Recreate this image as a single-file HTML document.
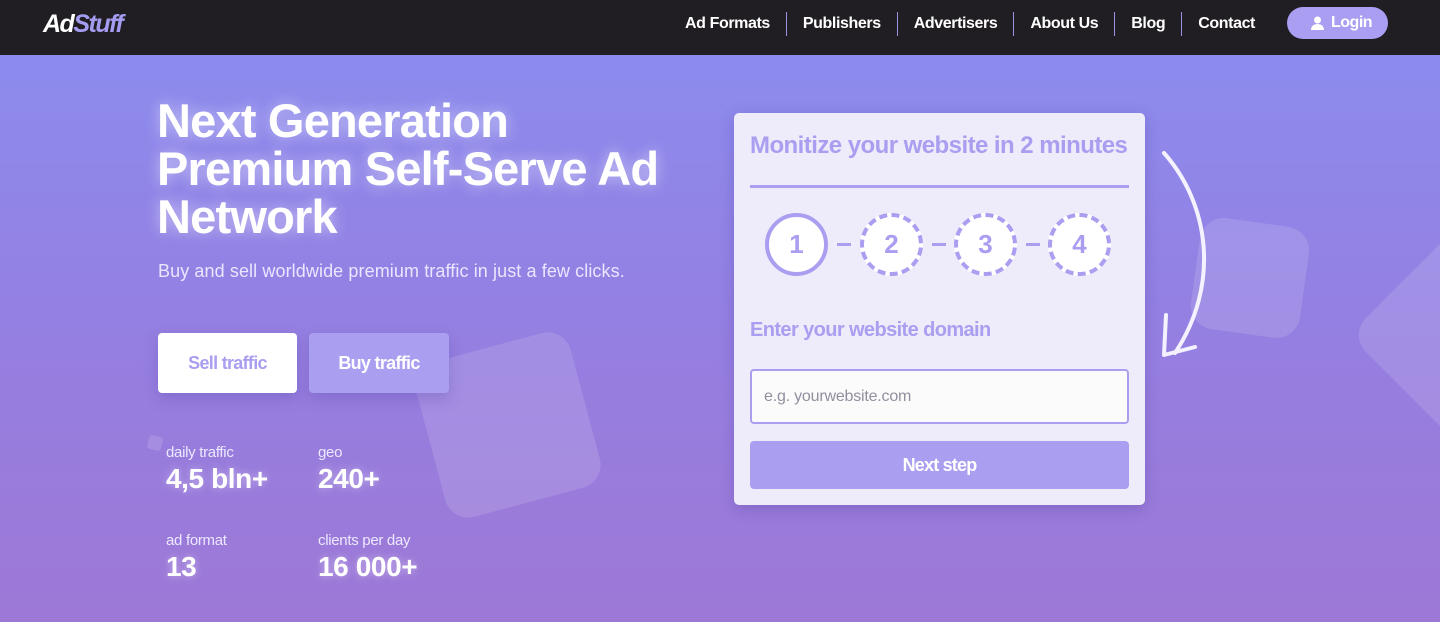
<!DOCTYPE html>
<html><head><style>
*{margin:0;padding:0;box-sizing:border-box}
body{width:1440px;height:622px;overflow:hidden;font-family:"Liberation Sans",sans-serif;background:linear-gradient(180deg,#8a8ef0 0%,#9480e2 50%,#9d78d6 100%);position:relative}
.nav{height:55px;background:#201e22;position:relative}
.logo{position:absolute;left:43px;top:10px;font-size:25px;font-weight:bold;font-style:italic;color:#fff;letter-spacing:-1.5px}
.logo span{color:#a49cf0}
.links{position:absolute;right:169px;top:12px;display:flex;font-size:16px;font-weight:bold;color:#fff;letter-spacing:-0.4px}
.links div{padding:0 16px;border-left:1px solid #9a94e0;line-height:24px}
.links div:first-child{border:none}
.login{position:absolute;left:1287px;top:7px;width:101px;height:32px;border-radius:16px;background:#a99ef2;color:#fff;font-weight:bold;font-size:16px;line-height:32px;padding-left:44px;letter-spacing:-.5px}
h1{position:absolute;left:157px;top:97px;font-size:47px;line-height:48px;color:#fff;letter-spacing:-0.8px;text-shadow:0 0 14px rgba(255,255,255,.5)}
.sub{position:absolute;left:158px;top:261px;color:#eae6ff;font-size:18px;letter-spacing:0.1px}
.btn{position:absolute;top:333px;height:60px;border-radius:4px;font-size:18px;font-weight:bold;line-height:60px;text-align:center;letter-spacing:-.7px;box-shadow:0 6px 14px rgba(80,60,160,.25)}
.stat{position:absolute;color:#fff}
.stat small{display:block;font-size:15px;color:#ece8ff;letter-spacing:-.3px}
.stat b{display:block;font-size:28px;letter-spacing:-0.4px;margin-top:2px;text-shadow:0 0 8px rgba(255,255,255,.4)}
.shape{position:absolute;border-radius:24px;background:rgba(255,255,255,.13)}
.card{position:absolute;left:734px;top:113px;width:411px;height:392px;background:#eeebfa;border-radius:5px;box-shadow:0 4px 14px rgba(60,40,140,.25)}
.card h2{position:absolute;left:16px;top:19px;font-size:24px;color:#a99ef0;letter-spacing:-0.55px}
.line{position:absolute;left:16px;top:72px;width:379px;height:3px;background:#a99ef0}
.c{position:absolute;top:100px;width:63px;height:63px;border-radius:50%;background:#fff;border:4px dashed #a99ef0;color:#a99ef0;font-size:26px;text-align:center;line-height:55px;font-weight:bold}
.d{position:absolute;top:130px;width:14px;height:3px;background:#a99ef0}
.lbl{position:absolute;left:16px;top:206px;font-size:20px;color:#a99ef0;font-weight:bold;letter-spacing:-.6px}
.inp{position:absolute;left:16px;top:256px;width:379px;height:55px;border:2px solid #a99ef0;border-radius:4px;background:#fbfbfb;color:#8f8f9f;font-size:16px;line-height:51px;padding-left:12px;letter-spacing:-.2px}
.next{position:absolute;left:16px;top:328px;width:379px;height:48px;border-radius:4px;background:#a99ef0;color:#fff;font-weight:bold;font-size:18px;line-height:48px;text-align:center;letter-spacing:-.8px}
</style></head><body>
<div class="nav"><div class="logo">Ad<span>Stuff</span></div>
<div class="links"><div>Ad Formats</div><div>Publishers</div><div>Advertisers</div><div>About Us</div><div>Blog</div><div>Contact</div></div>
<div class="login"><svg style="position:absolute;left:24px;top:9px" width="13" height="14" viewBox="0 0 13 14"><circle cx="6.5" cy="4" r="3.5" fill="#fff"/><path d="M0 14c0-4 3-6 6.5-6S13 10 13 14z" fill="#fff"/></svg>Login</div></div>
<div class="shape" style="left:428px;top:345px;width:160px;height:160px;transform:rotate(-15deg)"></div>
<div class="shape" style="left:1195px;top:222px;width:110px;height:112px;transform:rotate(8deg)"></div>
<div class="shape" style="left:1380px;top:260px;width:150px;height:150px;transform:rotate(45deg)"></div>
<div class="shape" style="left:148px;top:436px;width:14px;height:14px;border-radius:3px;transform:rotate(15deg)"></div>
<h1>Next Generation<br>Premium Self-Serve Ad<br>Network</h1>
<div class="sub">Buy and sell worldwide premium traffic in just a few clicks.</div>
<div class="btn" style="left:158px;width:139px;background:#fff;color:#a99ef0">Sell traffic</div>
<div class="btn" style="left:309px;width:140px;background:#a99ef0;color:#fff">Buy traffic</div>
<div class="stat" style="left:166px;top:444px"><small>daily traffic</small><b>4,5 bln+</b></div>
<div class="stat" style="left:318px;top:444px"><small>geo</small><b>240+</b></div>
<div class="stat" style="left:166px;top:532px"><small>ad format</small><b>13</b></div>
<div class="stat" style="left:318px;top:532px"><small>clients per day</small><b>16 000+</b></div>
<div class="card"><h2>Monitize your website in 2 minutes</h2><div class="line"></div>
<div class="c" style="left:31px;border-style:solid">1</div><div class="d" style="left:103px"></div>
<div class="c" style="left:126px">2</div><div class="d" style="left:198px"></div>
<div class="c" style="left:220px">3</div><div class="d" style="left:292px"></div>
<div class="c" style="left:314px">4</div>
<div class="lbl">Enter your website domain</div>
<div class="inp">e.g. yourwebsite.com</div>
<div class="next">Next step</div></div>
<svg style="position:absolute;left:1150px;top:145px" width="70" height="220" viewBox="0 0 70 220"><path d="M14 8 C60 60 70 140 25 208" stroke="#f4f2ff" stroke-width="4" fill="none" stroke-linecap="round"/><path d="M16 170 L14 210 L45 202" stroke="#f4f2ff" stroke-width="4" fill="none" stroke-linecap="round" stroke-linejoin="round"/></svg>
</body></html>
